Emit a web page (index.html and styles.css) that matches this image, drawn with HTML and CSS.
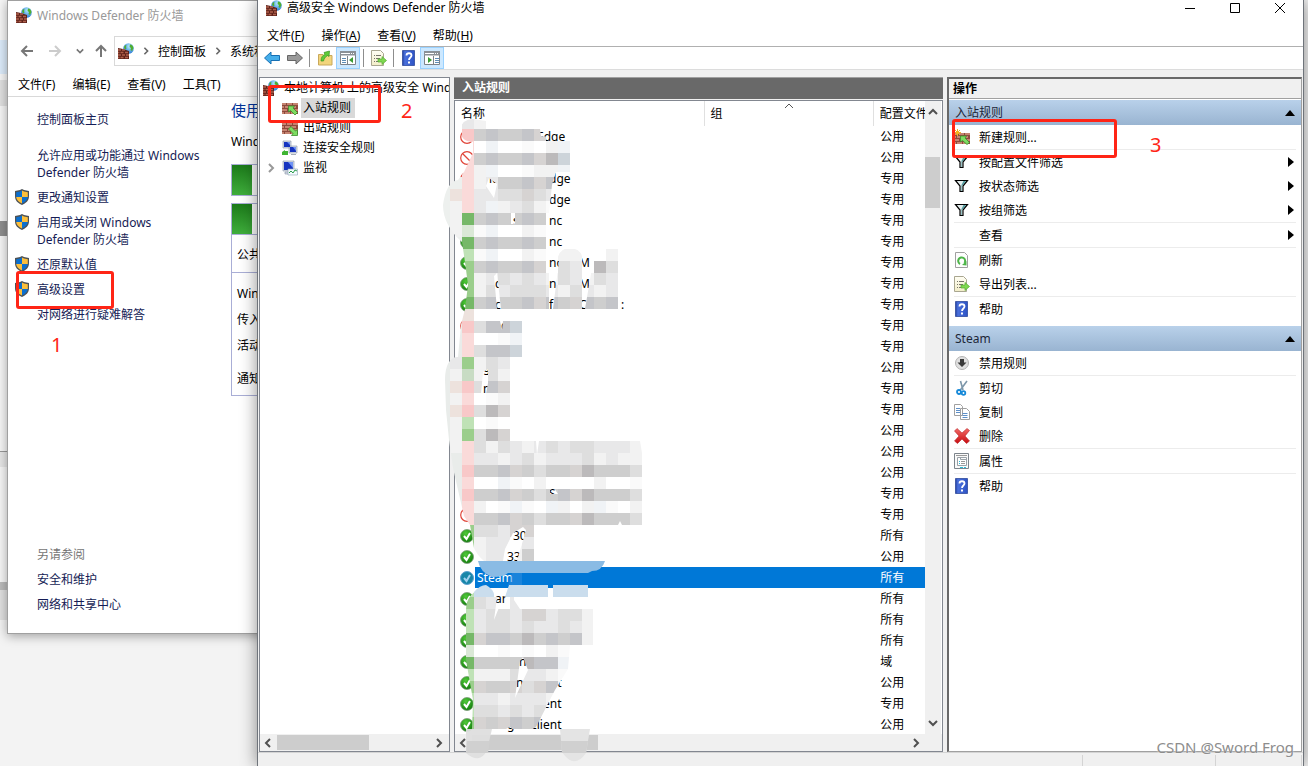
FILE: index.html
```html
<!DOCTYPE html>
<html lang="zh-CN">
<head>
<meta charset="utf-8">
<title>高级安全 Windows Defender 防火墙</title>
<link rel="stylesheet" href="styles.css">
</head>
<body>
<svg class="defs" aria-hidden="true">
  <defs>
    <linearGradient id="gDoc" x1="0" y1="0" x2="0" y2="1"><stop offset="0" stop-color="#fffef4"/><stop offset="1" stop-color="#f2edc8"/></linearGradient>
    <linearGradient id="gHelp" x1="0" y1="0" x2="1" y2="0"><stop offset="0" stop-color="#2340a0"/><stop offset=".2" stop-color="#4a70dc"/><stop offset="1" stop-color="#2c52c4"/></linearGradient>
    <radialGradient id="gOk" cx=".4" cy=".3" r=".8"><stop offset="0" stop-color="#4fc838"/><stop offset="1" stop-color="#0c7408"/></radialGradient>
    <radialGradient id="gGlobe" cx=".6" cy=".3" r=".8"><stop offset="0" stop-color="#b4ecff"/><stop offset="1" stop-color="#1468cc"/></radialGradient>
    <linearGradient id="gRed" x1="0" y1="0" x2="0" y2="1"><stop offset="0" stop-color="#f26a66"/><stop offset="1" stop-color="#c80c10"/></linearGradient>
  </defs>
  <symbol id="wall" viewBox="0 0 16 12">
    <path fill="#8d4a3c" d="M0 1h16v11H0z"/>
    <path stroke="#c58370" stroke-width="2" d="M0 2h4M5 2h5M11 2h5M0 5h2M3 5h5M9 5h5M0 8h5M6 8h5M12 8h4M0 11h2M3 11h5M9 11h5"/>
  </symbol>
  <symbol id="fw" viewBox="0 0 16 16">
    <circle cx="10.500" cy="5.500" r="5.300" fill="url(#gGlobe)"/>
    <path fill="#4fae30" d="M12 1.500c2 0 3 1.500 3.500 3.500L14 8l-1.500-1 .5-2-1.500-1zM6 4l1.500-2 1 .5-.5 1.500.5 1.500-1.500 1z"/>
    <path fill="#5f231b" d="M0 5l5 1 6 2v8H0z"/>
    <path stroke="#b0604c" stroke-width="1.500" d="M0 7h3M4 7h3M0 9.500h1.500M2.500 9.500h3M7 9.500h3M0 12h3M4 12h3M8 12h3M0 14.500h1.500M2.500 14.500h3M7 14.500h3"/>
  </symbol>
  <symbol id="inrule" viewBox="0 0 16 16"><use href="#wall" y="2" width="16" height="12"/><path fill="#7ddc62" stroke="#3a8e2c" stroke-width=".8" d="M6.500 6h6l-1.500 2 4.500 4.500-2.500 2.500L8.500 10.500l-2 1.500z"/></symbol>
  <symbol id="outrule" viewBox="0 0 16 16"><use href="#wall" y="2" width="16" height="12"/><path fill="#7ddc62" stroke="#3a8e2c" stroke-width=".8" d="M15.500 15.500h-6l1.500-2L6.500 9 9 6.500l4.500 4.500 2-1.500z"/></symbol>
  <symbol id="newrule" viewBox="0 0 16 16"><use href="#wall" y="3" width="16" height="12"/><path fill="#7ddc62" stroke="#3a8e2c" stroke-width=".8" d="M6.500 7h6l-1.500 2 4.500 4.500-2.500 2L8.500 11.500l-2 1.500z"/><path stroke="#f6b21d" d="M3.500 0v7M0 3.500h7M1 1l5 5M6 1L1 6"/></symbol>
  <symbol id="pcs" viewBox="0 0 16 16">
    <path fill="#d9dfe8" stroke="#8592a5" stroke-width=".6" d="M1 1h8v7H1zM7 6h8v7H7z"/><path fill="#1634c0" d="M2 2h6v5H2zM8 7h6v5H8z"/><path fill="#6f93f3" d="M5 2h3v3zM11 7h3v4z"/><path fill="#a6adb8" d="M9 14h5v1H9z"/><path fill="#3fb533" d="M0 12l3-2v1h3v4H0z"/>
  </symbol>
  <symbol id="monitor" viewBox="0 0 16 16">
    <path fill="#d9dfe8" stroke="#8592a5" stroke-width=".6" d="M1 1h11v10H1zM3 12h7v2H3z"/><path fill="#1634c0" d="M2 2h9v8H2z"/><path fill="#6f93f3" d="M6 2h5v6z"/><path fill="#f4faff" stroke="#8aa2b4" stroke-width=".6" d="M6 9h9.500v6H6z"/><path fill="none" stroke="#2a9e48" d="M7 13l2-2 2 2 2-3 2 1"/>
  </symbol>
  <symbol id="shield" viewBox="0 0 16 16">
    <path fill="#4d5256" d="M8 0l2 1 5 1v5c0 5-3 7-7 9-4-2-7-4-7-9V2l5-1z"/>
    <path fill="#fcbf3b" d="M8 1.500V8h5.800V3.200L10 2.500zM2.200 8H8v6.500C4.500 13 2.500 11 2.200 8z"/>
    <path fill="#0c6fce" d="M8 1.500V8H2.200V3.200L6 2.500zM13.800 8H8v6.500c3.500-1.500 5.500-3.500 5.800-6.500z"/>
  </symbol>
  <symbol id="filter" viewBox="0 0 16 16"><path fill="#e4eded" stroke="#000" stroke-width="1.200" d="M1.500 2.500h12L9 8v5.500H6V8z"/><path fill="#4e9c9e" d="M8 8l4-5h-2.500L7.500 7v6H8z"/></symbol>
  <symbol id="refresh" viewBox="0 0 16 16"><path fill="#fdfdfd" stroke="#a0a0a0" d="M1.500.5h9l3 3v12h-12z"/><path fill="none" stroke="#4db548" stroke-width="2" d="M6 12a3.500 3.500 0 1 1 4.500-1"/><path fill="#4db548" d="M8 13l4.500.5V9z"/></symbol>
  <symbol id="export" viewBox="0 0 16 16"><path fill="url(#gDoc)" stroke="#a9a690" d="M.5.500h9l3 3v12H.5z"/><path stroke="#77756a" d="M3 5.500h1M5 5.500h5M3 8.500h1M5 8.500h4M3 11.500h1M5 11.500h3"/><path fill="#7fd850" stroke="#55ac30" stroke-width=".7" d="M7 9h4V6.500l4.500 4-4.500 4V12H7z"/></symbol>
  <symbol id="help" viewBox="0 0 16 16"><path fill="url(#gHelp)" stroke="#203c92" stroke-width=".7" d="M1.500.5h12v15h-12z"/><path fill="none" stroke="#fff" stroke-width="1.800" d="M5.500 5.500c0-3 5-3 5 0 0 2-2.500 2-2.500 4.500"/><path fill="#fff" d="M7 11.500h2v2H7z"/></symbol>
  <symbol id="disable" viewBox="0 0 16 16"><circle cx="8" cy="8" r="6.500" fill="#e0e0e0" stroke="#b4b4b4"/><path fill="#3a3a3a" d="M6 4h4v3.500h2.500L8 12 3.500 7.500H6z"/></symbol>
  <symbol id="cut" viewBox="0 0 16 16"><path stroke="#7d97aa" stroke-width="1.600" d="M6.500 1l2.500 9M13 1L6 10.500"/><circle cx="5" cy="12" r="2" fill="none" stroke="#1689d8" stroke-width="1.800"/><circle cx="9.500" cy="13" r="1.800" fill="none" stroke="#1689d8" stroke-width="1.800"/></symbol>
  <symbol id="copy" viewBox="0 0 16 16"><path fill="#fff" stroke="#a0a0a0" d="M.5.500h6l2 2v9h-8zM6.500 4.500h6l3 3v8h-9z"/><path stroke="#5d8fc8" d="M2 4.500h4M2 6.500h4M2 8.500h4M8.500 9.500h5M8.500 11.500h5M8.500 13.500h5"/></symbol>
  <symbol id="delete" viewBox="0 0 16 16"><path fill="url(#gRed)" stroke="#b92328" stroke-width=".6" d="M3 .5L8 5l5-4.500 2.500 2L11 8l4.500 5-3 2.500L8 11l-4.500 4.500-3-2.500L5 8 .5 3z"/></symbol>
  <symbol id="props" viewBox="0 0 16 16"><path fill="#fafafa" stroke="#7d858c" d="M.5.500h14v15H.5z"/><path fill="#fff" stroke="#9aa2a8" d="M3.500 4.500h9v8h-9zM6.500 4.500v2h6"/><path stroke="#999" d="M2 2.500h11M7 8.500h4M7 10.500h4"/><path stroke="#2abbd8" d="M5 8.500h1M5 10.500h1M6 14.500h3M10 14.500h2"/></symbol>
  <symbol id="back" viewBox="0 0 16 16"><path fill="#45aeea" stroke="#1670b4" d="M.5 8L7 2v3.500h8.500v5H7V14z"/></symbol>
  <symbol id="fwd" viewBox="0 0 16 16"><path fill="#999" stroke="#666" d="M15.500 8L9 2v3.500H.5v5H9V14z"/></symbol>
  <symbol id="folder" viewBox="0 0 16 16"><path fill="#f2d57c" stroke="#c9a85a" d="M1.500 4.500H6l1 1h8v9.500H1.500z"/><path fill="#5ecb38" stroke="#3c9320" stroke-width=".7" d="M4 11c0-4 2-6 4-6.500L7 2.500l5.500-1.500L12 6.500l-1.500-1C8 7 7 9 6.500 11z"/></symbol>
  <symbol id="paneL" viewBox="0 0 18 16"><path fill="#fff" stroke="#7e8389" d="M1.500 1.500h15v13h-15zM8.500 6v8"/><path fill="#8a9096" d="M1 1h16v4.500H1z"/><path stroke="#fff" d="M2 3.500h9M12 3.500h1M14 3.500h1"/><path stroke="#5f8db5" d="M3 8.500h4M3 10.500h4M3 12.500h4"/><path fill="#3b9b33" d="M14 7v6l-4-3z"/></symbol>
  <symbol id="paneR" viewBox="0 0 18 16"><path fill="#fff" stroke="#7e8389" d="M1.500 1.500h15v13h-15zM10.500 6v8"/><path fill="#8a9096" d="M1 1h16v4.500H1z"/><path stroke="#fff" d="M2 3.500h9M12 3.500h1M14 3.500h1"/><path stroke="#5f8db5" d="M12 8.500h4M12 10.500h4M12 12.500h4"/><path fill="#3b9b33" d="M5 7v6l4-3z"/></symbol>
  <symbol id="ok" viewBox="0 0 14 14"><circle cx="7" cy="7" r="6.500" fill="url(#gOk)" stroke="#7c9a78" stroke-width=".8"/><path fill="none" stroke="#fff" stroke-width="2" d="M4 7l2.500 3L10 4"/></symbol>
  <symbol id="oksel" viewBox="0 0 14 14"><circle cx="7" cy="7" r="6.500" fill="#1786a8" stroke="#5b9fd0"/><path fill="none" stroke="#9fd0ee" stroke-width="2" d="M4 7l2.500 3L10 4"/></symbol>
  <symbol id="no" viewBox="0 0 14 14"><circle cx="7" cy="7" r="6.300" fill="#fff" stroke="#e04438" stroke-width="1.200"/><path stroke="#e04438" stroke-width="1.200" d="M3 3l8 8"/></symbol>
  <symbol id="chev" viewBox="0 0 10 10"><path fill="none" stroke="currentColor" stroke-width="2" d="M3 1l4 4-4 4"/></symbol>
  <symbol id="tri" viewBox="0 0 10 10"><path fill="#000" d="M2 0l6 5-6 5z"/></symbol>
  <symbol id="arrow" viewBox="0 0 14 14"><path fill="none" stroke="currentColor" stroke-width="2" d="M13 7H2M7 2L2 7l5 5"/></symbol>
</svg>

<div class="desktop">
  <div class="behind" aria-hidden="true"><i class="strip blue"></i><i class="strip grey"></i><i class="strip dark"></i><i class="strip mid"></i><i class="strip low"></i></div>

  <section class="panel-window">
    <header class="cp-title"><svg class="i16"><use href="#fw"/></svg><span>Windows Defender 防火墙</span></header>
    <nav class="cp-nav">
      <button aria-label="后退"><svg class="i14"><use href="#arrow"/></svg></button>
      <button aria-label="前进" class="pale"><svg class="i14 flip"><use href="#arrow"/></svg></button>
      <button aria-label="最近"><svg class="i8 down"><use href="#chev"/></svg></button>
      <button aria-label="向上"><svg class="i14 turn"><use href="#arrow"/></svg></button>
      <div class="crumbs"><svg class="i16"><use href="#fw"/></svg><svg class="i8"><use href="#chev"/></svg><span>控制面板</span><svg class="i8"><use href="#chev"/></svg><span>系统和</span></div>
    </nav>
    <div class="cp-menu"><button>文件(F)</button><button>编辑(E)</button><button>查看(V)</button><button>工具(T)</button></div>
    <div class="cp-body">
      <aside class="cp-side">
        <a href="#" class="home">控制面板主页</a>
        <a href="#">允许应用或功能通过 Windows Defender 防火墙</a>
        <a href="#"><svg class="i16"><use href="#shield"/></svg>更改通知设置</a>
        <a href="#"><svg class="i16"><use href="#shield"/></svg>启用或关闭 Windows Defender 防火墙</a>
        <a href="#"><svg class="i16"><use href="#shield"/></svg>还原默认值</a>
        <a href="#"><svg class="i16"><use href="#shield"/></svg>高级设置</a>
        <a href="#">对网络进行疑难解答</a>
        <h2>另请参阅</h2>
        <a href="#">安全和维护</a>
        <a href="#">网络和共享中心</a>
      </aside>
      <main class="cp-main">
        <h1>使用</h1>
        <p>Wind</p>
        <div class="net"></div>
        <div class="net open"></div>
        <div class="net-box"><p class="first">公共</p><p>Win</p><p>传入</p><p>活动</p><p class="last">通知</p></div>
      </main>
    </div>
  </section>

  <section class="mmc">
    <header class="title">
      <svg class="i16"><use href="#fw"/></svg><span>高级安全 Windows Defender 防火墙</span>
      <div class="controls">
        <button aria-label="最小化"><svg class="i12" viewBox="0 0 12 12"><path stroke="#000" d="M1 6.500h10"/></svg></button>
        <button aria-label="最大化"><svg class="i12" viewBox="0 0 12 12"><path fill="none" stroke="#000" d="M1.500 1.500h9v9h-9z"/></svg></button>
        <button aria-label="关闭"><svg class="i12" viewBox="0 0 12 12"><path stroke="#000" d="M1 1l10 10M11 1L1 11"/></svg></button>
      </div>
    </header>
    <nav class="menu"><button>文件(<u>F</u>)</button><button>操作(<u>A</u>)</button><button>查看(<u>V</u>)</button><button>帮助(<u>H</u>)</button></nav>
    <div class="toolbar">
      <button aria-label="后退"><svg class="i16"><use href="#back"/></svg></button>
      <button aria-label="前进"><svg class="i16"><use href="#fwd"/></svg></button><hr>
      <button aria-label="上移"><svg class="i16"><use href="#folder"/></svg></button>
      <button aria-label="控制台树" class="on"><svg class="i18"><use href="#paneL"/></svg></button><hr>
      <button aria-label="导出"><svg class="i16"><use href="#export"/></svg></button><hr>
      <button aria-label="帮助"><svg class="i16"><use href="#help"/></svg></button>
      <button aria-label="操作窗格" class="on"><svg class="i18"><use href="#paneR"/></svg></button>
    </div>
    <div class="panes">
      <aside class="tree">
        <ul>
          <li class="root"><svg class="i16"><use href="#fw"/></svg><span>本地计算机 上的高级安全 Wind</span></li>
          <li><svg class="i16"><use href="#inrule"/></svg><span class="picked">入站规则</span></li>
          <li><svg class="i16"><use href="#outrule"/></svg><span>出站规则</span></li>
          <li><svg class="i16"><use href="#pcs"/></svg><span>连接安全规则</span></li>
          <li class="closed"><svg class="i10"><use href="#chev"/></svg><svg class="i16"><use href="#monitor"/></svg><span>监视</span></li>
        </ul>
        <div class="hbar"><svg class="i10 flip"><use href="#chev"/></svg><div class="track"><i class="thumb"></i></div><svg class="i10"><use href="#chev"/></svg></div>
      </aside>

      <main class="center">
        <h2>入站规则</h2>
        <div class="list">
          <div class="rows">
            <table>
              <thead><tr><th class="c-name">名称</th><th class="c-group">组<svg class="sort" viewBox="0 0 10 10"><path fill="none" stroke="#555" d="M1 7l4-4 4 4"/></svg></th><th class="c-prof">配置文件</th></tr></thead>
              <tbody>
                <tr><td><div class="nm"><svg><use href="#no"/></svg><span class="k10">Edge</span></div></td><td></td><td>公用</td></tr>
                <tr><td><div class="nm"><svg><use href="#no"/></svg></div></td><td></td><td>公用</td></tr>
                <tr><td><div class="nm"><svg><use href="#no"/></svg><span class="k2">lc</span><span class="k12">dge</span></div></td><td></td><td>专用</td></tr>
                <tr><td><div class="nm"><svg><use href="#no"/></svg><span class="k12">dge</span></div></td><td></td><td>专用</td></tr>
                <tr><td><div class="nm"><svg><use href="#ok"/></svg><span class="k6">s</span><span class="k12">nc</span></div></td><td></td><td>专用</td></tr>
                <tr><td><div class="nm"><svg><use href="#ok"/></svg><span class="k12">nc</span></div></td><td></td><td>专用</td></tr>
                <tr><td><div class="nm"><svg><use href="#ok"/></svg><span class="k12">nc</span><span class="k18">M</span></div></td><td></td><td>专用</td></tr>
                <tr><td><div class="nm"><svg><use href="#ok"/></svg><span class="k3">c</span><span class="k12">n</span><span class="k18">M</span></div></td><td></td><td>专用</td></tr>
                <tr><td><div class="nm"><svg><use href="#ok"/></svg><span class="k3">cr</span><span class="k12">f</span><span class="k18">C</span><span class="k24">:</span></div></td><td></td><td>专用</td></tr>
                <tr><td><div class="nm"><svg><use href="#no"/></svg><span class="k4">c</span></div></td><td></td><td>专用</td></tr>
                <tr><td><div class="nm"><svg><use href="#no"/></svg></div></td><td></td><td>专用</td></tr>
                <tr><td><div class="nm"><svg><use href="#ok"/></svg><span class="k1">g</span></div></td><td></td><td>公用</td></tr>
                <tr><td><div class="nm"><svg><use href="#no"/></svg><span class="k1">n</span></div></td><td></td><td>专用</td></tr>
                <tr><td><div class="nm"><svg><use href="#no"/></svg></div></td><td></td><td>专用</td></tr>
                <tr><td><div class="nm"><svg><use href="#ok"/></svg></div></td><td></td><td>公用</td></tr>
                <tr><td><div class="nm"><svg><use href="#no"/></svg></div></td><td></td><td>公用</td></tr>
                <tr><td><div class="nm"><svg><use href="#no"/></svg></div></td><td></td><td>公用</td></tr>
                <tr><td><div class="nm"><svg><use href="#no"/></svg><span class="k12">S</span></div></td><td></td><td>专用</td></tr>
                <tr><td><div class="nm"><svg><use href="#no"/></svg></div></td><td></td><td>专用</td></tr>
                <tr><td><div class="nm"><svg><use href="#ok"/></svg><span class="k6">30</span></div></td><td></td><td>所有</td></tr>
                <tr><td><div class="nm"><svg><use href="#ok"/></svg><span class="k5">33</span></div></td><td></td><td>公用</td></tr>
                <tr class="sel"><td><div class="nm"><svg><use href="#oksel"/></svg><span class="k0">Steam</span></div></td><td></td><td>所有</td></tr>
                <tr><td><div class="nm"><svg><use href="#ok"/></svg><span class="k3">ar</span></div></td><td></td><td>所有</td></tr>
                <tr><td><div class="nm"><svg><use href="#ok"/></svg><span class="k3">a</span></div></td><td></td><td>所有</td></tr>
                <tr><td><div class="nm"><svg><use href="#ok"/></svg></div></td><td></td><td>所有</td></tr>
                <tr><td><div class="nm"><svg><use href="#ok"/></svg><span class="k7">n</span></div></td><td></td><td>域</td></tr>
                <tr><td><div class="nm"><svg><use href="#ok"/></svg><span class="k6">in</span><span class="k11">ent</span></div></td><td></td><td>公用</td></tr>
                <tr><td><div class="nm"><svg><use href="#ok"/></svg><span class="k11">ent</span></div></td><td></td><td>专用</td></tr>
                <tr><td><div class="nm"><svg><use href="#ok"/></svg><span class="k5">g</span><span class="k8">client</span></div></td><td></td><td>公用</td></tr>
              </tbody>
            </table>
            <div class="vbar"><svg class="i10 turnup"><use href="#chev"/></svg><div class="track"><i class="thumb"></i></div><svg class="i10 down"><use href="#chev"/></svg></div>
          </div>
          <div class="hbar"><svg class="i10 flip"><use href="#chev"/></svg><div class="track"><i class="thumb"></i></div><svg class="i10"><use href="#chev"/></svg></div>
        </div>
      </main>

      <aside class="actions">
        <h2>操作</h2>
        <h3>入站规则<svg class="i10 turnup"><use href="#tri"/></svg></h3>
        <ul>
          <li><button><svg class="i16"><use href="#newrule"/></svg>新建规则...</button></li>
          <li class="cut"><button><svg class="i16"><use href="#filter"/></svg>按配置文件筛选<svg class="i10 more"><use href="#tri"/></svg></button></li>
          <li><button><svg class="i16"><use href="#filter"/></svg>按状态筛选<svg class="i10 more"><use href="#tri"/></svg></button></li>
          <li><button><svg class="i16"><use href="#filter"/></svg>按组筛选<svg class="i10 more"><use href="#tri"/></svg></button></li>
          <li class="cut"><button><svg class="i16"></svg>查看<svg class="i10 more"><use href="#tri"/></svg></button></li>
          <li class="cut"><button><svg class="i16"><use href="#refresh"/></svg>刷新</button></li>
          <li><button><svg class="i16"><use href="#export"/></svg>导出列表...</button></li>
          <li class="cut"><button><svg class="i16"><use href="#help"/></svg>帮助</button></li>
        </ul>
        <h3>Steam<svg class="i10 turnup"><use href="#tri"/></svg></h3>
        <ul>
          <li><button><svg class="i16"><use href="#disable"/></svg>禁用规则</button></li>
          <li class="cut"><button><svg class="i16"><use href="#cut"/></svg>剪切</button></li>
          <li><button><svg class="i16"><use href="#copy"/></svg>复制</button></li>
          <li><button><svg class="i16"><use href="#delete"/></svg>删除</button></li>
          <li class="cut"><button><svg class="i16"><use href="#props"/></svg>属性</button></li>
          <li class="cut"><button><svg class="i16"><use href="#help"/></svg>帮助</button></li>
        </ul>
      </aside>
    </div>
    <footer class="status"><i></i><i></i><i></i></footer>
  </section>

  <svg class="mosaic" viewBox="440 110 210 656" aria-hidden="true">
    <defs><clipPath id="brush"><path clip-rule="evenodd" d="M460 130Q462 119 473 119L486 121V129H540L541 136L570 140V172H556L552 185L549 213V261H557Q559 248 570 248Q583 249 583 262H593L606 249H618V297H620V309H560L522 310V357H510V441H640L642 453V525H534V561H484Q477 555 474 548L470 525L464 516L458 490L453 468L449 440L446 410L445 380Q445 358 458 357L461 325L465 309L468 285L465 262L462 242Q443 225 443 205Q446 182 458 180L464 172L473 153V142Q461 142 460 130Z
      M486 186L489 178L497 184L494 198Z M511 213H515V224H511Z M494 276L497 273L501 309L497 309Z M549 261H559L553 309H549Z M582 262H593L585 309H582Z M500 321H503L502 330Z M483 372L488 369V383L486 394H481Z M536 441H539L537 455Z M550 490L554 488L558 494H550Z M620 521L622 525H618Z M523 527L526 530L517 561H503L505 549L513 533Z
      M466 610Q466 595 480 589H514V600L520 609H593V645H570L568 669L555 690L536 727Q520 737 510 727Q495 735 486 729H472L473 700L466 660ZM494 620L498 590H506Z M520 661L523 657L528 670L515 698Z"/></clipPath></defs>
    <g clip-path="url(#brush)"><rect x="440" y="177" width="22" height="72" fill="#edf0ee"/><rect x="440" y="309" width="22" height="220" fill="#e9ecea"/></g>
    <g id="cells" clip-path="url(#brush)"></g>
    <path fill="#8abbe4" d="M478 561H605Q602 571 592 571L588 573H516L508 573Q504 577 492 577Q480 572 478 561Z"/>
    <path fill="#328ee0" d="M516 561L512 573H588V573H522V585H508Z" opacity=".5"/>
    <path fill="#cadded" d="M474 592Q480 585 486 585Q495 590 494 597H474ZM509 585H548V597H505ZM553 585H588V597H553Z"/>
    <path fill="#dedede" opacity=".95" d="M466 729H492L487 750Q480 765 466 753Z"/>
    <path fill="#e4e4e4" d="M560 729H590L586 753Q574 770 562 752Z"/>
    <path fill="#d0d0d0" d="M467 741H490L488 753H466ZM561 741H588L586 753H562Z"/>
  </svg>

  <div class="mark m1"></div><div class="mark m2"></div><div class="mark m3"></div>
  <span class="num n1">1</span><span class="num n2">2</span><span class="num n3">3</span>
  <span class="credit">CSDN @Sword Frog</span>
</div>
<script src="mosaic.js"></script>
</body>
</html>
```
FILE: styles.css
```css
* { box-sizing: border-box; }
body { margin: 0; font: 12px/17px "Noto Sans", "Noto Sans CJK SC", sans-serif; color: #000; }
button { font: inherit; color: inherit; background: none; border: 0; padding: 0; }
h1, h2, h3, p, ul { margin: 0; padding: 0; font-weight: normal; font-size: 12px; }
ul { list-style: none; }
svg { flex: none; display: block; }
a { color: #151c55; text-decoration: none; }
.defs { position: absolute; width: 0; height: 0; }
.i8 { width: 8px; height: 8px; }
.i10 { width: 10px; height: 10px; }
.i12 { width: 12px; height: 12px; }
.i14 { width: 14px; height: 14px; }
.i16 { width: 16px; height: 16px; }
.i18 { width: 18px; height: 16px; }
.flip { transform: rotate(180deg); }
.down, .turn { transform: rotate(90deg); }
.turnup { transform: rotate(-90deg); }

.desktop { position: relative; height: 100vh; overflow: hidden; background: #f3f3f3; }
.behind { display: flex; flex-direction: column; width: 8px; height: 620px; background: #f6f6f6; }
.strip { display: block; width: 100%; }
.strip.blue { height: 34px; margin-top: 40px; background: #dcebfa; }
.strip.grey { height: 26px; margin-top: 6px; background: #e0e0e0; }
.strip.dark { height: 16px; margin-top: 115px; background: #8f8f8f; }
.strip.mid { height: 16px; margin-top: 215px; background: #e6e6e6; border-top: 1px solid #999; }
.strip.low { height: 38px; margin-top: 115px; background: #e0e0e0; border-top: 8px solid #bbb; }

.panel-window { position: absolute; left: 7px; top: 0; width: 400px; height: 634px; background: #fff; border: 1px solid #a0a0a0; box-shadow: 0 2px 10px rgba(0,0,0,.35); }
.cp-title { display: flex; align-items: center; gap: 5px; height: 28px; padding-left: 8px; color: #999; }
.cp-nav { display: flex; align-items: center; height: 44px; padding: 0 0 0 12px; color: #777; }
.cp-nav button { margin-right: 14px; }
.cp-nav button:nth-child(3) { margin-right: 10px; }
.cp-nav button:nth-child(4) { margin-right: 6px; }
.cp-nav .pale { color: #ccc; }
.crumbs { display: flex; flex: 1; align-items: center; gap: 8px; height: 30px; padding-left: 3px; border: 1px solid #d9d9d9; color: #666; }
.crumbs span { color: #000; white-space: nowrap; }
.cp-menu { display: flex; gap: 17px; height: 24px; padding: 0 10px 0; border-bottom: 1px solid #d9d9d9; }
.cp-body { display: flex; }
.cp-side { display: flex; flex-direction: column; gap: 8px; width: 223px; padding: 14px 25px 0 29px; }
.cp-side a { position: relative; }
.cp-side a svg { position: absolute; left: -23px; top: 0; }
.cp-side .home { margin-bottom: 11px; }
.cp-side h2 { margin-top: 215px; color: #767676; }
.cp-main { flex: 1; padding-top: 2px; }
.cp-main h1 { font-size: 15px; line-height: 22px; color: #003399; }
.cp-main > p { margin: 12px 0 14px; }
.net { height: 32px; border: 1px solid #a9aed6; background: linear-gradient(#1c7a1a, #3fae3c) 0 0 / 20px 100% no-repeat; margin-bottom: 7px; }
.net.open { margin: 0; }
.net-box { border: 1px solid #a9aed6; border-top: 0; padding-left: 5px; height: 161px; }
.net-box p { margin-bottom: 9px; }
.net-box .first { height: 38px; margin: 0 0 12px -5px; padding: 11px 5px; border-bottom: 1px solid #a9aed6; }
.net-box .last { margin-top: 16px; }

.mmc { position: absolute; left: 257px; right: 4px; top: 0; bottom: 0; display: flex; flex-direction: column; background: #f0f0f0; border: solid #6f747b; border-width: 0 1px; box-shadow: 0 0 16px rgba(0,0,0,.45); }
.title { display: flex; align-items: center; gap: 5px; height: 24px; padding: 0 17px 9px 8px; background: #fff; }
.controls { display: flex; gap: 33px; margin-left: auto; }
.menu { display: flex; gap: 17px; height: 22px; padding: 1px 9px; background: #fff; }
.toolbar { display: flex; align-items: center; height: 24px; background: #fff; border-top: 1px solid #b0b0b0; border-bottom: 1px solid #dcdcdc; padding-left: 2px; }
.toolbar button { display: grid; place-items: center; width: 23px; height: 22px; }
.toolbar .on { width: 24px; background: #cce8ff; border: 1px solid #99d1ff; }
.toolbar hr { width: 1px; height: 18px; margin: 0 3px; border: 0; background: #8d8d8d; }
.panes { display: flex; flex: 1; min-height: 0; gap: 4px; padding: 7px 1px 0 1px; }

.tree { display: flex; flex-direction: column; width: 191px; background: #fff; border: 1px solid #828790; }
.tree ul { flex: 1; overflow: hidden; }
.tree li { display: flex; align-items: center; gap: 3px; height: 20px; padding-left: 22px; white-space: nowrap; }
.tree li.root { padding-left: 3px; gap: 3px; }
.tree li.closed { padding-left: 6px; gap: 6px; color: #999; }
.tree li.closed span { color: #000; margin-left: -3px; }
.tree li span { padding: 0 2px; line-height: 20px; }
.tree .picked { background: #d9d9d9; padding-right: 4px; }
.hbar { display: flex; align-items: center; height: 17px; padding: 0 5px 0 3px; gap: 4px; background: #f0f0f0; color: #505050; }
.track { flex: 1; }
.hbar .track, .hbar .thumb { height: 15px; }
.thumb { display: block; background: #cdcdcd; }
.tree .thumb { width: 60%; }

.center { display: flex; flex-direction: column; flex: 1; min-width: 0; }
.center h2 { height: 22px; padding: 1px 8px; background: #696969; color: #fff; font-weight: bold; border-top: 1px solid #a0a0a0; }
.list { display: flex; flex-direction: column; flex: 1; min-height: 0; margin-top: 1px; background: #fff; border: 1px solid #828790; }
.rows { display: flex; flex: 1; min-height: 0; padding-right: 1px; overflow: hidden; }
.rows table { flex: 1; table-layout: fixed; border-collapse: collapse; align-self: flex-start; width: 100%; }
.rows th { position: relative; height: 25px; padding: 0 0 0 6px; font-weight: normal; text-align: left; white-space: nowrap; overflow: hidden; border-left: 1px solid #e0e0e0; }
.rows th:first-child { border-left: 0; }
.c-name { width: 53%; }
.c-group { width: 36%; }
.sort { position: absolute; left: 47%; top: 0; width: 10px; height: 10px; }
.rows td { height: 21px; padding: 0 0 0 7px; line-height: 17px; }
.rows td:first-child { padding-left: 5px; }
.nm { display: grid; grid-template-columns: 17px repeat(30, 6px); align-items: center; white-space: nowrap; }
.nm svg { width: 14px; height: 14px; grid-column: 1; grid-row: 1; }
.nm span { grid-row: 1; width: 0; }
.k0 { grid-column: 2; } .k1 { grid-column: 3; } .k2 { grid-column: 4; } .k3 { grid-column: 5; }
.k4 { grid-column: 6; } .k5 { grid-column: 7; } .k6 { grid-column: 8; } .k7 { grid-column: 9; }
.k8 { grid-column: 11; } .k10 { grid-column: 12; } .k11 { grid-column: 13; } .k12 { grid-column: 14; }
.k18 { grid-column: 19; } .k24 { grid-column: 26; }
.sel { color: #fff; background: linear-gradient(#0078d7, #0078d7) 20px 0 no-repeat; }
.vbar { display: flex; flex-direction: column; align-items: center; width: 16px; padding: 6px 0; background: #f0f0f0; color: #505050; }
.vbar .track { width: 100%; padding-top: 40px; }
.vbar .thumb { width: 15px; height: 51px; }
.list > .hbar { padding-right: 21px; }
.list > .hbar .thumb { width: 29%; }

.actions { width: 355px; background: #fff; border: 1px solid #a0a0a0; border-width: 2px 1px 1px 2px; border-top-color: #696969; border-left-color: #696969; }
.actions h2 { height: 20px; padding: 1px 4px; background: #f0f0f0; font-weight: bold; border-bottom: 1px solid #a0a0a0; }
.actions h3 { display: flex; align-items: center; justify-content: space-between; height: 25px; margin-top: 1px; padding: 0 6px; background: linear-gradient(#b9d1ea, #99b4d1); color: #1d2738; }
.actions ul { padding: 0 5px; }
.actions li { height: 24px; }
.actions li.cut { height: 25px; border-top: 1px solid #ececec; }
.actions li button { display: flex; align-items: center; width: 100%; height: 24px; gap: 9px; text-align: left; }
.actions ul + h3 { margin-top: 5px; }
.more { margin-left: auto; }
.status { display: flex; justify-content: flex-end; height: 14px; border-top: 1px solid #d4d4d4; padding-right: 1px; }
.status i { width: 133px; border-left: 1px solid #d4d4d4; margin-top: 2px; }
.status i:nth-child(2) { width: 86px; }
.status i:last-child { width: 1px; }

.mosaic { position: absolute; left: 440px; top: 110px; width: 210px; height: 656px; }
.mark { position: absolute; border: 3px solid #ff2516; border-radius: 3px; }
.m1 { left: 16px; top: 271px; width: 98px; height: 38px; }
.m2 { left: 268px; top: 85px; width: 113px; height: 38px; }
.m3 { left: 952px; top: 119px; width: 165px; height: 39px; }
.num { position: absolute; font-size: 20px; line-height: 24px; color: #ff2516; }
.n1 { left: 51px; top: 333px; }
.n2 { left: 401px; top: 99px; }
.n3 { left: 1150px; top: 133px; }
.credit { position: absolute; right: 14px; bottom: 9px; font-size: 15px; line-height: 20px; color: #8d8d8d; text-shadow: 0 0 2px #fff; }
```
FILE: mosaic.js
```js
// Pixelation over the rule names: one string per 12px row, one letter per 12px cell.
const palette = {
  w: '#ffffff', 0: '#fafafa', 1: '#f2f2f2', 2: '#e8e8e9', 3: '#dedede', 4: '#d6d3d2',
  5: '#cecece', 6: '#c4c5c9', 7: '#bcbabb', b: '#cdd4da', B: '#f0f3f6',
  r: '#f8c8c8', s: '#fadad9', g: '#76b868', h: '#9bce8c', i: '#bfe2b6', j: '#dae8d6',
  k: '#c8dcc4', l: '#ede2dd'
};
const rows = [
  '.21', '.r565564', '.swBww0w1B', '.s5655647b', '.s1Bww011B', '.s1255646', 'ls2233432', '1s2B12310',
  '1g565565', '1j0Bww10', '.g565565', '.i0Bww10.11..1', '.h565564.32.73', '.h123232132132',
  '.h132333213212', '.g565564654656', '.l', '.r366b', '.sww0B', '.s366b', '2h132', '1k131',
  'lr364', '1sw01', 'lr374', '1iw0w', '1h374', '1s31321232332221', '.s22123122231211',
  '.r55645355475553', '.swwB0w1wwww1ww0', '.r55645356475553', '.s1w0B0wB1w1B0w1',
  '.s55645355475553', '.h33244', '.h12212', '.j12215', '', '', '.i3..', '.h32.2',
  '.i2332442331', '.i2332322321', '.g4665756561', '.jww0w0w10', '.g5555766B', '.i11132210',
  '.h4554346B', '.i22122210', '.i33232310', '.h4546566'
];
const layer = document.getElementById('cells');
rows.forEach((row, y) => {
  [...row].forEach((key, x) => {
    if (!palette[key]) return;
    const cell = document.createElementNS('http://www.w3.org/2000/svg', 'rect');
    cell.setAttribute('x', 450 + x * 12);
    cell.setAttribute('y', 117 + y * 12);
    cell.setAttribute('width', 12);
    cell.setAttribute('height', 12);
    cell.setAttribute('fill', palette[key]);
    layer.append(cell);
  });
});
```
